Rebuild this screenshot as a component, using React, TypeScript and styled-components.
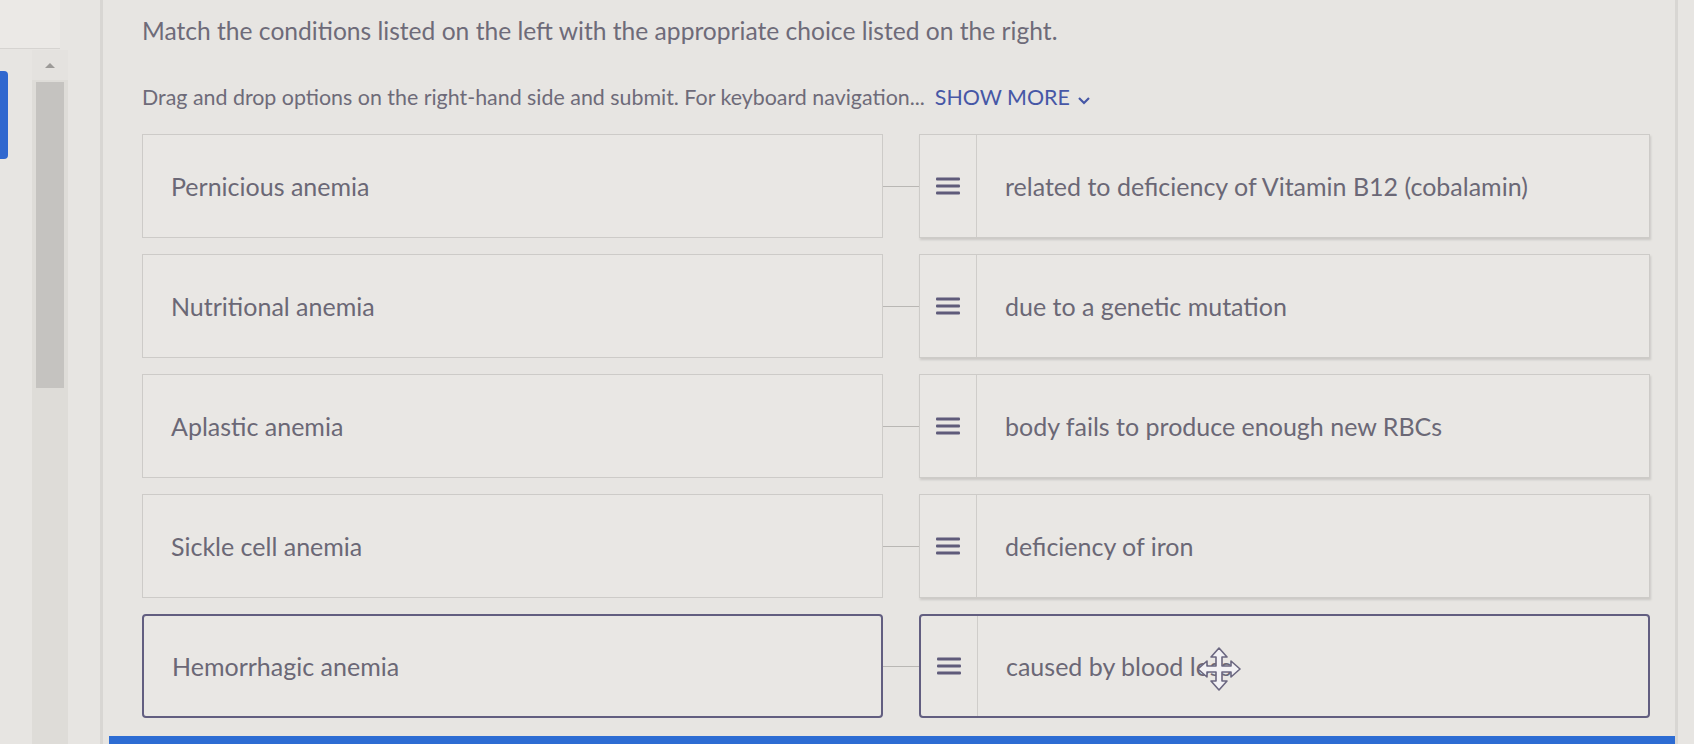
import React from 'react';
import styled, { createGlobalStyle, css } from 'styled-components';

const GlobalStyle = createGlobalStyle`
  html, body {
    margin: 0;
    padding: 0;
    background: #e7e5e2;
    overflow: hidden;
  }
  body {
    font-family: Lato, "Open Sans", sans-serif;
    color: #6b6876;
  }
`;

const Page = styled.div`
  display: flex;
  width: 1694px;
  height: 744px;
  overflow: hidden;
`;

const Rail = styled.div`
  width: 32px;
  flex: none;
  display: flex;
  flex-direction: column;
`;

const RailTop = styled.div`
  height: 48px;
  border-bottom: 1px solid #d6d4d1;
  background: #ebe9e6;
  margin-right: -28px;
`;

const BlueTab = styled.div`
  margin-top: 22px;
  width: 8px;
  height: 88px;
  background: #2f67cf;
  border-radius: 0 4px 4px 0;
`;

const Scroll = styled.div`
  width: 36px;
  flex: none;
  margin-top: 50px;
  display: flex;
  flex-direction: column;
  align-items: center;
  background: #dedcd8;
`;

const ScrollArrow = styled.div`
  height: 30px;
  width: 100%;
  display: flex;
  justify-content: center;
  align-items: center;
  background: #e4e2df;
  &::before {
    content: '';
    border-left: 5px solid transparent;
    border-right: 5px solid transparent;
    border-bottom: 5px solid #9c9a98;
  }
`;

const Thumb = styled.div`
  width: 28px;
  height: 306px;
  background: #c5c3c0;
  margin-top: 2px;
`;

const Gutter = styled.div`
  width: 32px;
  flex: none;
  border-right: 3px solid #d8d6d3;
`;

const Panel = styled.div`
  width: 1572px;
  flex: none;
  border-right: 3px solid #d8d6d3;
  display: flex;
  flex-direction: column;
  position: relative;
`;

const Content = styled.div`
  padding: 16px 0 0 39px;
  flex: 1;
`;

const Title = styled.h1`
  margin: 0;
  font-size: 24.6px;
  font-weight: 400;
  line-height: 30px;
  color: #6e6b79;
`;

const Hint = styled.p`
  margin: 37px 0 0;
  font-size: 21.4px;
  line-height: 28px;
  color: #6e6b79;
`;

const ShowMore = styled.span`
  margin-left: 10px;
  color: #4657a6;
  text-transform: uppercase;
  svg {
    margin-left: 7px;
    vertical-align: -1px;
  }
`;

const Grid = styled.div`
  margin-top: 23px;
  display: grid;
  grid-template-columns: 741px 36px 731px;
  grid-auto-rows: 104px;
  row-gap: 16px;
`;

const boxBorder = css<{ $active?: boolean }>`
  border: ${(p) => (p.$active ? '2px solid #625e80' : '1px solid #cdcbc8')};
  border-radius: ${(p) => (p.$active ? '4px' : '0')};
`;

const Term = styled.div<{ $active?: boolean }>`
  ${boxBorder};
  display: flex;
  align-items: center;
  padding-left: 28px;
  font-size: 25px;
  background: #e9e7e4;
`;

const Link = styled.div`
  display: flex;
  align-items: center;
  &::before {
    content: '';
    flex: 1;
    height: 1px;
    background: #b9b7b4;
  }
`;

const Choice = styled.div<{ $active?: boolean }>`
  ${boxBorder};
  display: flex;
  background: #e9e7e4;
  box-shadow: ${(p) => (p.$active ? 'none' : '1px 2px 2px rgba(120, 116, 110, 0.25)')};
`;

const Handle = styled.div`
  width: 56px;
  flex: none;
  border-right: 1px solid #cfcdca;
  display: flex;
  align-items: center;
  justify-content: center;
`;

const ChoiceText = styled.div`
  display: flex;
  align-items: center;
  padding-left: 28px;
  font-size: 25px;
  color: #6b6876;
`;

const BottomBar = styled.div`
  height: 8px;
  margin-left: 6px;
  background: #2d6cd3;
`;

const MoveCursor = styled.svg`
  position: absolute;
  left: 1094px;
  top: 646px;
`;

const Lines = () => (
  <svg width="24" height="18" viewBox="0 0 24 18">
    {[2, 9, 16].map((y) => (
      <rect key={y} x="0" y={y - 1.5} width="24" height="3" rx="1" fill="#5f5b7a" />
    ))}
  </svg>
);

const rows = [
  { term: 'Pernicious anemia', choice: 'related to deficiency of Vitamin B12 (cobalamin)' },
  { term: 'Nutritional anemia', choice: 'due to a genetic mutation' },
  { term: 'Aplastic anemia', choice: 'body fails to produce enough new RBCs' },
  { term: 'Sickle cell anemia', choice: 'deficiency of iron' },
  { term: 'Hemorrhagic anemia', choice: 'caused by blood loss', active: true },
];

export default function App() {
  return (
    <>
      <GlobalStyle />
      <Page>
        <Rail>
          <RailTop />
          <BlueTab />
        </Rail>
        <Scroll>
          <ScrollArrow />
          <Thumb />
        </Scroll>
        <Gutter />
        <Panel>
          <Content>
            <Title>Match the conditions listed on the left with the appropriate choice listed on the right.</Title>
            <Hint>
              Drag and drop options on the right-hand side and submit. For keyboard navigation...
              <ShowMore>
                Show more
                <svg width="14" height="10" viewBox="0 0 14 10">
                  <path d="M2 2 L7 7 L12 2" fill="none" stroke="#4657a6" strokeWidth="2.2" />
                </svg>
              </ShowMore>
            </Hint>
            <Grid>
              {rows.map((r) => (
                <React.Fragment key={r.term}>
                  <Term $active={r.active}>{r.term}</Term>
                  <Link />
                  <Choice $active={r.active}>
                    <Handle>
                      <Lines />
                    </Handle>
                    <ChoiceText>{r.choice}</ChoiceText>
                  </Choice>
                </React.Fragment>
              ))}
            </Grid>
          </Content>
          <BottomBar />
          <MoveCursor width="44" height="46" viewBox="0 0 44 46">
            <path
              d="M20 2 L28 11 L23 11 L23 20 L32 20 L32 15 L41 23 L32 31 L32 26 L23 26 L23 35 L28 35 L20 44 L12 35 L17 35 L17 26 L8 26 L8 31 L-1 23 L8 15 L8 20 L17 20 L17 11 L12 11 Z"
              fill="#f2f1f4"
              stroke="#6b6780"
              strokeWidth="1.6"
              strokeLinejoin="round"
              transform="translate(2 0)"
            />
          </MoveCursor>
        </Panel>
      </Page>
    </>
  );
}
